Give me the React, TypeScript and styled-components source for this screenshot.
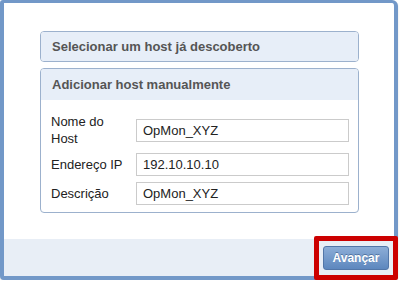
import React from 'react';
import styled, { createGlobalStyle } from 'styled-components';

const GlobalStyle = createGlobalStyle`
  html, body {
    margin: 0;
    padding: 0;
    background: #ffffff;
  }
  body {
    font-family: "Liberation Sans", Arial, sans-serif;
  }
`;

const Frame = styled.div`
  box-sizing: border-box;
  width: 398px;
  height: 280px;
  border: 4px solid #7298c8;
  border-top-width: 3px;
  border-radius: 3px 6px 4px 4px;
  background: #ffffff;
  display: flex;
  flex-direction: column;
  box-shadow: 0 1px 2px rgba(0, 0, 0, 0.15);
`;

const Content = styled.div`
  flex: 1;
  padding: 28px 0 0 36px;
  display: flex;
  flex-direction: column;
  gap: 6px;
`;

const Panel = styled.div`
  box-sizing: border-box;
  width: 319px;
  border: 1px solid #9cb1cd;
  border-radius: 4px;
  background: #ffffff;
  overflow: hidden;
`;

const PanelHeader = styled.div<{ $tall?: boolean }>`
  height: ${p => (p.$tall ? 31 : 29)}px;
  display: flex;
  align-items: center;
  padding-left: 11px;
  background: #e7eef8;
  color: #555555;
  font-size: 13px;
  font-weight: 700;
`;

const PanelBody = styled.div`
  padding: 13px 9px 7px 10px;
  display: flex;
  flex-direction: column;
  gap: 6px;
`;

const Row = styled.div`
  display: flex;
  align-items: center;
`;

const Label = styled.div`
  width: 85px;
  font-size: 13px;
  line-height: 17px;
  color: #222222;
`;

const LabelText = styled.span`
  display: inline-block;
  width: 72px;
`;

const Input = styled.input`
  box-sizing: border-box;
  width: 213px;
  height: 23px;
  border: 1px solid #cbcbcb;
  padding: 0 6px;
  font-family: "Liberation Sans", Arial, sans-serif;
  font-size: 13px;
  color: #222222;
  background: #ffffff;
  outline: none;
`;

const Footer = styled.div`
  height: 37px;
  background: #e8eef6;
  display: flex;
  align-items: center;
  justify-content: flex-end;
  padding-right: 5px;
`;

const NextButton = styled.button`
  position: relative;
  box-sizing: border-box;
  width: 66px;
  height: 24px;
  margin-top: 1px;
  border: 1px solid #5276a8;
  border-radius: 3px;
  background: linear-gradient(to bottom, #8cadd7, #5d87be);
  color: #ffffff;
  font-family: "Liberation Sans", Arial, sans-serif;
  font-size: 12px;
  font-weight: 700;
  text-shadow: 0 -1px 0 rgba(40, 70, 110, 0.5);
  cursor: pointer;

  /* red annotation box drawn over the screenshot */
  &::after {
    content: '';
    position: absolute;
    left: -10px;
    right: -10px;
    top: -11px;
    bottom: -11px;
    border: 5px solid #cc0000;
    border-radius: 2px;
    pointer-events: none;
  }
`;

const fields = [
  { label: 'Nome do Host', value: 'OpMon_XYZ' },
  { label: 'Endereço IP', value: '192.10.10.10' },
  { label: 'Descrição', value: 'OpMon_XYZ' },
];

const App: React.FC = () => {
  return (
    <>
      <GlobalStyle />
      <Frame>
        <Content>
          <Panel>
            <PanelHeader>Selecionar um host já descoberto</PanelHeader>
          </Panel>
          <Panel>
            <PanelHeader $tall>Adicionar host manualmente</PanelHeader>
            <PanelBody>
              {fields.map((f, i) => (
                <Row key={i}>
                  <Label>
                    <LabelText>{f.label}</LabelText>
                  </Label>
                  <Input defaultValue={f.value} />
                </Row>
              ))}
            </PanelBody>
          </Panel>
        </Content>
        <Footer>
          <NextButton>Avançar</NextButton>
        </Footer>
      </Frame>
    </>
  );
};

export default App;
